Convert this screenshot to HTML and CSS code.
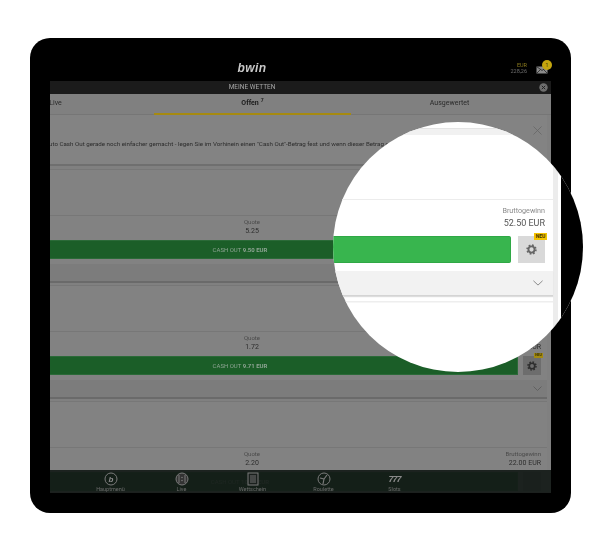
FILE: index.html
```html
<!DOCTYPE html>
<html lang="de">
<head>
<meta charset="utf-8">
<title>Meine Wetten</title>
<link rel="stylesheet" href="styles.css">
</head>
<body>
<div class="stage">
  <div class="tablet">
    <header class="topbar">
      <span class="logo">bwin</span>
      <div class="account">
        <div class="balance"><span class="cur">EUR</span><span class="amt">228,26</span></div>
        <div class="mail">
          <svg width="12" height="8" viewBox="0 0 12 8"><rect x="0.5" y="0.5" width="11" height="7" fill="#8a8a8a"/><path d="M.5.5 6 4.5 11.5.5M.5 7.5 4.5 3.5M11.5 7.5 7.5 3.5" fill="none" stroke="#222" stroke-width=".8"/></svg>
          <span class="mail-badge">1</span>
        </div>
      </div>
    </header>
    <main class="screen">
      <div class="titlebar">
        <span>MEINE WETTEN</span>
        <span class="title-close"><svg width="9" height="9" viewBox="0 0 9 9"><circle cx="4.5" cy="4.5" r="4.2" fill="#6e6e6e"/><path d="M2.8 2.8 6.2 6.2M6.2 2.8 2.8 6.2" stroke="#222" stroke-width="1"/></svg></span>
      </div>
      <nav class="tabs">
        <span class="tab">Live</span>
        <span class="tab tab-active">Offen<sup class="tab-count">7</sup></span>
        <span class="tab">Ausgewertet</span>
      </nav>
      <section class="banner">
        <svg class="banner-x" width="9" height="9" viewBox="0 0 9 9"><path d="M.5.5 8.5 8.5M8.5.5.5 8.5" stroke="#666" stroke-width=".8"/></svg>
        <p class="banner-text">Auto Cash Out gerade noch einfacher gemacht - legen Sie im Vorhinein einen "Cash Out"-Betrag fest und wenn dieser Betrag erreicht</p>
      </section>
      <section class="card">
        <div class="card-top"></div>
        <div class="meta"><div class="stat stat-mid"><span class="stat-l">Quote</span><span class="stat-v">5.25</span></div></div>
        <div class="actions"><div class="cash"><span>CASH OUT <b>9.50 EUR</b></span></div><div class="gear"></div></div>
        <div class="band"></div>
      </section>
      <section class="card">
        <div class="card-top"></div>
        <div class="meta"><div class="stat stat-mid"><span class="stat-l">Quote</span><span class="stat-v">1.72</span></div><div class="stat stat-end"><span class="stat-l">Bruttogewinn</span><span class="stat-v">16.51 EUR</span></div></div>
        <div class="actions"><div class="cash"><span>CASH OUT <b>9.71 EUR</b></span></div><div class="gear"><svg width="10" height="10" viewBox="0 0 16 16"><circle cx="8" cy="8" r="4.4" fill="none" stroke="#2e2e2e" stroke-width="2.6"/><circle cx="8" cy="8" r="6.4" fill="none" stroke="#2e2e2e" stroke-width="2.4" stroke-dasharray="2.5 2.53"/></svg><span class="neu neu-sm">NEU</span></div></div>
        <div class="band"><svg class="chev" width="9" height="5" viewBox="0 0 9 5"><path d="M.5.5 4.5 4.5 8.5.5" fill="none" stroke="#5a5a5a" stroke-width=".8"/></svg></div>
      </section>
      <section class="card">
        <div class="card-top"></div>
        <div class="meta"><div class="stat stat-mid"><span class="stat-l">Quote</span><span class="stat-v">2.20</span></div><div class="stat stat-end"><span class="stat-l">Bruttogewinn</span><span class="stat-v">22.00 EUR</span></div></div>
        <div class="actions"><div class="cash"><span>CASH OUT <b>10.00 EUR</b></span></div><div class="gear"></div></div>
      </section>
      <footer class="dock">
        <div class="dock-item"><svg width="14" height="14" viewBox="0 0 14 14"><circle cx="7" cy="7" r="6" fill="none" stroke="#7a7a7a"/><text x="7" y="10" text-anchor="middle" class="dock-b">b</text></svg><span>Hauptmenü</span></div>
        <div class="dock-item"><svg width="14" height="14" viewBox="0 0 14 14"><circle cx="7" cy="7" r="6" fill="#333" stroke="#7a7a7a"/><path d="M4 3v8M10 3v8" stroke="#7a7a7a"/><circle cx="7" cy="5.5" r=".7" fill="#888"/><circle cx="7" cy="8.5" r=".7" fill="#888"/></svg><span>Live</span></div>
        <div class="dock-item"><svg width="12" height="14" viewBox="0 0 12 14"><rect x="1" y="1" width="10" height="12" fill="#1a201d" stroke="#7a7a7a"/><path d="M3 4h6M3 6h6M3 8h6M3 10h6" stroke="#7a7a7a" stroke-width=".9"/></svg><span>Wettschein</span></div>
        <div class="dock-item"><svg width="14" height="14" viewBox="0 0 14 14"><circle cx="7" cy="7" r="6" fill="none" stroke="#7a7a7a"/><path d="M7 7 10 3M7 7 3 6M7 7 6 12" stroke="#7a7a7a" stroke-width="1.2"/></svg><span>Roulette</span></div>
        <div class="dock-item"><span class="sevens">777</span><span>Slots</span></div>
      </footer>
    </main>
  </div>
  <div class="lens">
    <div class="lens-main">
      <div class="lens-bar"></div>
      <div class="lens-top"></div>
      <div class="lens-meta"><span class="lens-l">Bruttogewinn</span><span class="lens-v">52.50 EUR</span></div>
      <div class="lens-actions">
        <div class="lens-cash"></div>
        <div class="lens-gear">
          <svg width="11" height="11" viewBox="0 0 16 16"><circle cx="8" cy="8" r="4.4" fill="none" stroke="#666" stroke-width="2.6"/><circle cx="8" cy="8" r="6.4" fill="none" stroke="#666" stroke-width="2.4" stroke-dasharray="2.5 2.53"/></svg>
          <span class="neu">NEU</span>
        </div>
      </div>
      <div class="lens-band"><svg width="10" height="6" viewBox="0 0 12 7"><path d="M.5.8 6 6 11.5.8" fill="none" stroke="#777" stroke-width="1"/></svg></div>
      <div class="lens-next"></div>
    </div>
    <div class="lens-side"></div>
  </div>
</div>
</body>
</html>
```
FILE: styles.css
```css
* { box-sizing: border-box; }
html, body { margin: 0; padding: 0; background: #fff; }
body { width: 600px; height: 550px; overflow: hidden; font-family: Roboto, "Liberation Sans", sans-serif; }
p { margin: 0; }

.stage { position: relative; width: 600px; height: 550px; padding: 38px 29px 0 30px; }

.tablet { width: 541px; height: 475px; background: #000; border-radius: 20px; padding: 0 20px 20px; display: flex; flex-direction: column; }

.topbar { height: 43px; flex: none; position: relative; display: flex; align-items: flex-end; justify-content: center; padding: 0 97px 6px 0; filter: blur(.3px); }
.logo { font: italic 700 12px "Liberation Sans", sans-serif; letter-spacing: .4px; color: #c9c9c9; }
.account { position: absolute; right: 3px; top: 24px; display: flex; gap: 9px; }
.balance { display: flex; flex-direction: column; align-items: flex-end; font-size: 5.5px; line-height: 6px; }
.cur { color: #8a7a1e; }
.amt { color: #6e6e6e; }
.mail { position: relative; margin-top: 4px; width: 12px; height: 8px; }
.mail svg { display: block; }
.mail-badge { position: absolute; left: 6px; top: -6px; width: 10px; height: 10px; border-radius: 50%; background: #c4a60f; color: #3a3000; font-size: 5px; line-height: 10px; text-align: center; }

.screen { flex: 1; position: relative; overflow: hidden; background: #808080; display: flex; flex-direction: column; filter: blur(.3px); }

.titlebar { height: 13px; flex: none; background: #1b1b1b; color: #a6a6a6; font-size: 6.5px; line-height: 13px; text-align: center; position: relative; padding-right: 97px; }
.title-close { position: absolute; right: 3px; top: 2px; height: 9px; }
.title-close svg { display: block; }

.tabs { flex: none; height: 21px; display: grid; grid-template-columns: repeat(3, 197px); margin-left: -93px; border-bottom: 1px solid #767676; font-size: 7px; color: #2a2a2a; }
.tab { display: block; text-align: center; line-height: 19px; height: 21px; }
.tab-active { border-bottom: 2px solid #a68a10; font-weight: 700; color: #1c1c1c; }
.tab-count { font-size: 5px; line-height: 0; margin-left: 2px; }

.banner { flex: none; height: 51px; margin: 0 4px 1px 0; position: relative; border-bottom: 2px solid #6f6f6f; padding-top: 24px; overflow: hidden; background: #838383; }
.banner-x { position: absolute; right: 5px; top: 11px; }
.banner-text { white-space: nowrap; font-size: 6.2px; line-height: 10px; color: #2c2c2c; margin-left: -5px; }

.card { flex: none; height: 114px; margin: 2px 4px 0 0; background: #828282; border-top: 1px solid #777; border-bottom: 2px solid #6a6a6a; display: flex; flex-direction: column; }
.card-top { height: 46px; flex: none; border-bottom: 1px solid #777; }
.meta { height: 24px; flex: none; position: relative; }
.stat { position: absolute; top: 2px; display: flex; flex-direction: column; }
.stat-mid { left: 152px; width: 100px; align-items: center; }
.stat-end { right: 6px; align-items: flex-end; }
.stat-l { font-size: 6px; line-height: 8px; color: #4a4a4a; }
.stat-v { font-size: 7px; line-height: 10px; color: #2d2d2d; }

.actions { display: flex; gap: 5px; height: 19px; flex: none; padding-right: 6px; }
.cash { flex: 1; background: #1b5e28; border: 1px solid #2b6a38; border-left: 0; color: #8ea493; font-size: 6px; line-height: 17px; text-align: center; }
.cash span { display: block; width: 380px; }
.gear { width: 18px; flex: none; background: #6d6d6d; position: relative; display: flex; align-items: center; justify-content: center; }
.gear svg { display: block; }
.band { height: 17px; margin-top: 5px; flex: none; background: #7c7c7c; position: relative; display: flex; align-items: center; justify-content: flex-end; padding-right: 5px; }

.neu { position: absolute; right: -2px; top: -3px; width: 13px; height: 7px; background: #f4c400; color: #3a3000; font: 700 5px/7px Roboto, sans-serif; text-align: center; }
.neu-sm { right: -2px; width: 9px; height: 5px; background: #a38a10; font-size: 3.5px; line-height: 5px; }

.dock { position: absolute; left: 0; right: 0; top: 389px; height: 23px; background: rgba(20, 26, 23, .92); display: grid; grid-template-columns: repeat(5, 71px); padding-left: 25px; border-bottom: 1px solid #1c201e; }
.dock-item { display: flex; flex-direction: column; align-items: center; color: #6c6c6c; font-size: 5.5px; line-height: 7px; padding-top: 2px; }
.dock-item svg { display: block; height: 14px; }
.dock-b { font: italic 700 8px "Liberation Sans", sans-serif; fill: #8a8a8a; }
.sevens { font: italic 700 9px/14px "Liberation Sans", sans-serif; letter-spacing: -1px; color: #8a8a8a; height: 14px; }

.lens { position: absolute; left: 333px; top: 122px; width: 250px; height: 250px; border-radius: 50%; overflow: hidden; background: #fff; display: flex; }
.lens-main { width: 220px; flex: none; display: flex; flex-direction: column; filter: blur(.25px); }
.lens-bar { height: 13px; flex: none; border-bottom: 6px solid #f1f1f1; box-shadow: inset 0 -1px 0 #e4e4e4; }
.lens-top { height: 65px; flex: none; border-bottom: 1px solid #ececec; }
.lens-meta { height: 36px; flex: none; display: flex; flex-direction: column; align-items: flex-end; padding: 5px 8px 0 0; }
.lens-l { font-size: 7.2px; line-height: 12px; color: #8a8a8a; }
.lens-v { font-size: 9px; line-height: 12px; color: #555; }
.lens-actions { display: flex; gap: 7px; height: 27px; flex: none; padding-right: 8px; }
.lens-cash { flex: 1; background: #38b54e; border: 1px solid #2fa845; border-left: 0; border-radius: 0 2px 2px 0; }
.lens-gear { width: 27px; flex: none; background: #d9d9d9; position: relative; display: flex; align-items: center; justify-content: center; }
.lens-gear svg { display: block; }
.lens-band { margin-top: 8px; height: 25px; flex: none; background: #f2f2f2; border-bottom: 1px solid #d4d4d4; box-shadow: 0 1px 1px #ddd; display: flex; align-items: center; justify-content: flex-end; padding-right: 10px; }
.lens-next { margin-top: 5px; flex: 1; border-top: 1px solid #eee; box-shadow: inset 0 1px 0 #f6f6f6; }
.lens-side { flex: 1; display: flex; background: #000; border-left: 5px solid #ececec; box-shadow: inset 3px 0 0 #fff; }
```
